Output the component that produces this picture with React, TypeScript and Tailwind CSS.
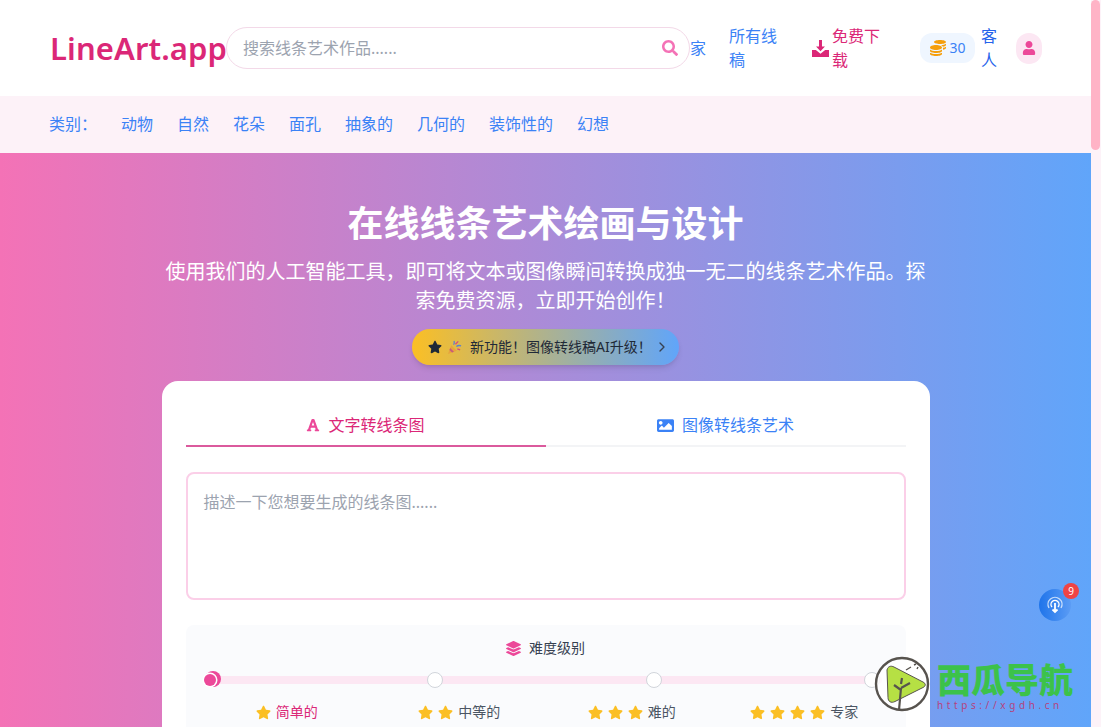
import { ChevronRight } from "lucide-react"
import { FaCoins, FaFont, FaImage, FaLayerGroup, FaSearch, FaStar, FaUser } from "react-icons/fa"

const font = "font-['Noto_Sans','Noto_Sans_CJK_SC',sans-serif]"

const categories = ["动物", "自然", "花朵", "面孔", "抽象的", "几何的", "装饰性的", "幻想"]

const levels = [
  { stars: 1, label: "简单的", active: true },
  { stars: 2, label: "中等的", active: false },
  { stars: 3, label: "难的", active: false },
  { stars: 4, label: "专家", active: false },
]

function DownloadIcon() {
  return (
    <svg viewBox="0 0 16 16" className="h-[17px] w-[17px] shrink-0 fill-[#db2777]">
      <path d="M6.6 0h2.8v6h2.8L8 10.6 3.8 6h2.8z" />
      <path d="M0 9.4h3.6L8 13l4.4-3.6H16V16H0z" />
    </svg>
  )
}

function Party() {
  return (
    <svg viewBox="0 0 16 16" className="h-[15px] w-[15px] shrink-0">
      <path d="M1 15l3.5-9.5 6 6z" fill="#e8a33d" />
      <path d="M3.4 8.5l4 4-2 .9-2.8-2.8z" fill="#c75b7a" />
      <path d="M7 5c1-1 1-2.5.5-4M10 7c1.4-1.2 3-1.4 5-.8" stroke="#5a7fd6" strokeWidth="1.4" fill="none" />
      <path d="M9 4.5l3-3M11 9.5l3 1" stroke="#d9487d" strokeWidth="1.4" fill="none" />
    </svg>
  )
}

function WatermarkLogo() {
  return (
    <svg viewBox="0 0 56 56" className="h-14 w-14 shrink-0">
      <circle cx="28" cy="28" r="26" fill="#fff" fillOpacity="0.75" stroke="#57534e" strokeWidth="2.4" />
      <path d="M13 14c1-4 4-4.500 7-3l29 15c3 1.500 3 4 0 5.500l-28 14c-4 2-7 0-7-4z" fill="#b6e044" stroke="#57534e" strokeWidth="1" />
      <path d="M25 54l2-22M27 34l-7-5M27 32l9-5M27 28l1-6" stroke="#57534e" strokeWidth="2.200" fill="none" />
      <path d="M32 14l5-3M40 9l2-1M43 13l1-2" stroke="#57534e" strokeWidth="1.400" fill="none" />
    </svg>
  )
}

export default function App() {
  return (
    <div className={`relative flex h-screen overflow-hidden bg-[#fdf2f8] ${font}`}>
      <div className="min-w-0 flex-1 overflow-hidden">
        {/* Header */}
        <header className="flex h-24 items-center bg-white pl-[50px]">
          <a className="w-[176px] shrink-0 text-[31px] font-semibold leading-9 tracking-[0.1px] whitespace-nowrap text-[#db2777]">LineArt.app</a>
          <div className="flex h-[42px] w-[464px] shrink-0 items-center justify-between rounded-full border border-[#f3d9e8] bg-white pl-4 pr-[11px]">
            <span className="text-base text-[#9ca3af]">搜索线条艺术作品......</span>
            <FaSearch className="h-4 w-4 text-[#f472b6]" />
          </div>
          <span className="text-base text-[#3b82f6]">家</span>
          <a className="ml-[23px] w-[50px] shrink-0 text-base leading-6 text-[#3b82f6]">所有线稿</a>
          <div className="ml-[33px] flex w-[68px] shrink-0 items-center gap-[3px]">
            <DownloadIcon />
            <span className="w-[49px] shrink-0 text-base leading-6 text-[#db2777]">免费下载</span>
          </div>
          <div className="ml-[40px] flex h-[30px] w-[55px] shrink-0 items-center justify-center gap-1 rounded-xl bg-[#eff6ff]">
            <FaCoins className="h-4 w-4 text-[#f59e0b]" />
            <span className="text-sm text-[#3b82f6]">30</span>
          </div>
          <span className="ml-[6px] w-[17px] shrink-0 text-base leading-6 text-[#2563eb]">客人</span>
          <div className="ml-[18px] flex h-[31px] w-[26px] shrink-0 items-center justify-center rounded-full bg-[#fce7f3]">
            <FaUser className="h-[14px] w-[14px] text-[#ec4899]" />
          </div>
        </header>

        {/* Categories */}
        <nav className="flex h-[57px] items-center gap-6 bg-[#fdf2f8] pb-[2px] pl-[49px] text-base text-[#3b82f6]">
          <span className="w-12">类别：</span>
          {categories.map((c) => (
            <a key={c}>{c}</a>
          ))}
        </nav>

        {/* Hero */}
        <section className="flex h-[574px] flex-col items-center bg-[linear-gradient(to_right,#f472b6,#60a5fa)] pt-[51px]">
          <h1 className="h-10 text-4xl font-bold leading-10 text-white">在线线条艺术绘画与设计</h1>
          <p className="mt-[13px] w-[768px] text-center text-xl leading-[29px] text-white">
            使用我们的人工智能工具，即可将文本或图像瞬间转换成独一无二的线条艺术作品。探索免费资源，立即开始创作！
          </p>
          <button className="mt-[14px] flex h-9 w-[267px] shrink-0 items-center rounded-full bg-[linear-gradient(to_right,#fbbf24,#60a5fa)] pl-4 text-sm text-[#1f2937] shadow-md">
            <FaStar className="h-[14px] w-[14px]" />
            <span className="ml-[5px]"><Party /></span>
            <span className="ml-2 w-[184px] text-left">新功能！图像转线稿AI升级！</span>
            <ChevronRight className="h-4 w-4 text-[#374151]" />
          </button>

          {/* Generator card */}
          <div className="mt-4 w-[768px] shrink-0 rounded-t-2xl bg-white px-6 pt-6 pb-6">
            <div className="flex border-b-2 border-[#f3f4f6]">
              <div className="-mb-[2px] flex h-[42px] flex-1 items-center justify-center gap-2 border-b-2 border-[#db5a9d] text-base text-[#db2777]">
                <FaFont className="h-[14px] w-[14px] text-[#ec4899]" />
                文字转线条图
              </div>
              <div className="flex h-10 flex-1 items-center justify-center gap-2 text-base text-[#3b82f6]">
                <FaImage className="h-[17px] w-[17px]" />
                图像转线条艺术
              </div>
            </div>
            <textarea
              className="mt-[25px] block h-[128px] w-full resize-none rounded-lg border-2 border-[#fbcfe8] bg-white px-4 py-4 text-base leading-6 outline-none placeholder:text-[#9ca3af]"
              placeholder="描述一下您想要生成的线条图......"
            />

            {/* Difficulty */}
            <div className="mt-[25px] rounded-lg bg-[#fafbfd] pt-[13px] pb-3">
              <div className="flex h-5 items-center justify-center gap-2 text-sm text-[#374151]">
                <FaLayerGroup className="h-[15px] w-[15px] text-[#ec4899]" />
                难度级别
              </div>
              <div className="relative mx-6 mt-[18px] h-2 rounded-full bg-[#fce7f3]">
                <div className="absolute -top-[5px] -left-[5px] h-4 w-4 rounded-full bg-[#ec4899]" />
                <div className="absolute -top-[2px] -left-[6px] h-3 w-3 rounded-full bg-[#ec4899] shadow-[0_0_0_1.5px_#fff]" />
                <div className="absolute -top-1 left-[217px] h-4 w-4 rounded-full border border-[#d1d5db] bg-white" />
                <div className="absolute -top-1 left-[436px] h-4 w-4 rounded-full border border-[#d1d5db] bg-white" />
                <div className="absolute -top-1 left-[654px] h-4 w-4 rounded-full border border-[#d1d5db] bg-white" />
              </div>
              <div className="mt-[18px] grid grid-cols-4 px-[15px]">
                {levels.map((l) => (
                  <div key={l.label} className="flex items-center justify-center gap-[5px] text-sm">
                    {Array.from({ length: l.stars }).map((_, i) => (
                      <FaStar key={i} className="h-[15px] w-[15px] text-[#fbbf24]" />
                    ))}
                    <span className={l.active ? "text-[#db2777]" : "text-[#4b5563]"}>{l.label}</span>
                  </div>
                ))}
              </div>
            </div>
          </div>
        </section>
      </div>

      {/* Scrollbar */}
      <div className="w-[10px] shrink-0 bg-[#fdf2f8]">
        <div className="h-[150px] w-[9px] rounded-full bg-[#ffb3c6]" />
      </div>

      {/* Floating download button */}
      <div className="absolute top-[589px] left-[1039px] flex h-8 w-8 items-center justify-center rounded-full bg-[linear-gradient(to_left,#5b9cf5,#1f74ea)]">
        <svg viewBox="0 0 20 20" className="h-5 w-5 fill-none stroke-white" strokeWidth="1.400">
          <path d="M4 13a7 7 0 1 1 12 0" strokeOpacity="0.7" />
          <path d="M7 12a4 4 0 1 1 6 0" />
          <path d="M10 8v9M7.500 14.500l2.500 2.500 2.500-2.500" strokeWidth="1.800" />
        </svg>
        <span className="absolute -top-[6px] -right-2 flex h-4 w-4 items-center justify-center rounded-full bg-[#ef4444] text-[10px] text-white">9</span>
      </div>

      {/* Watermark */}
      <div className="absolute top-[656px] left-[874px] flex gap-[7px]">
        <WatermarkLogo />
        <div className="pt-[6px]">
          <div className="text-[34px] font-black leading-[36px] whitespace-nowrap text-[#3cc24a]">西瓜导航</div>
          <div className="mt-[1px] text-[10px] leading-3 tracking-[3.6px] whitespace-nowrap text-[#b5437f]">https://xgdh.cn</div>
        </div>
      </div>
    </div>
  )
}
